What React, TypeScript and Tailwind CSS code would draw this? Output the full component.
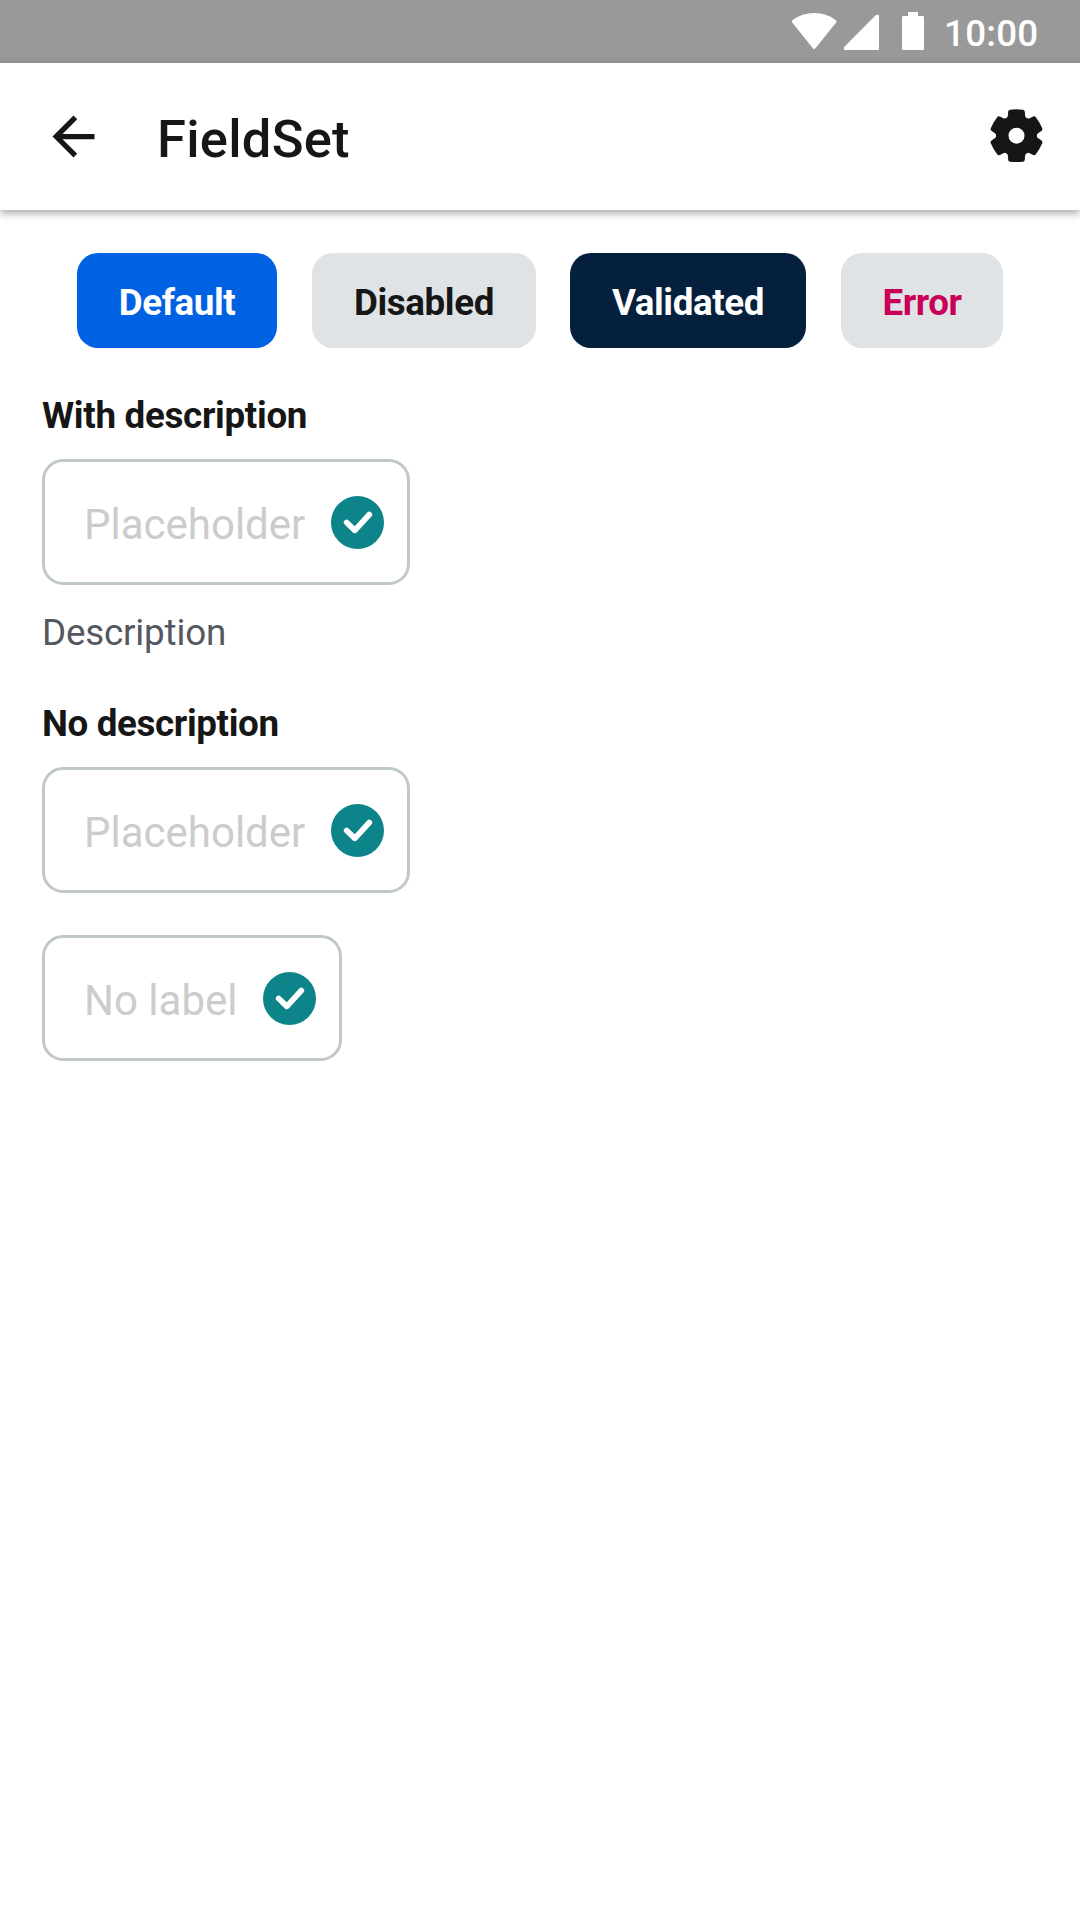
import React from "react";

const TEETH = [0, 60, 120, 180, 240, 300];

function StatusBar() {
  return (
    <div className="flex h-[63px] bg-[#999999] pl-[791px] text-white">
      <svg className="h-[63px] w-[46px] shrink-0" viewBox="33 0 138 189" fill="currentColor">
        <path d="M36 67Q34 63 38 60Q66 39 102.500 39Q139 39 167 60Q171 63 169 67L107 144Q102.500 150 98 144Z" />
      </svg>
      <svg className="ml-[6px] h-[63px] w-[37px] shrink-0" viewBox="189 0 111 189" fill="currentColor">
        <path d="M193 140L287 46Q290 44 293 44Q297 44 297 48V146Q297 150 293 150H195Q192 150 192 146V143Z" />
      </svg>
      <svg className="ml-[21px] h-[63px] w-[24px] shrink-0" viewBox="363 0 72 189" fill="currentColor">
        <path d="M384 36H414V48H428Q432 48 432 52V146Q432 150 428 150H370Q366 150 366 146V52Q366 48 370 48H384Z" />
      </svg>
      <span className="ml-[19px] pt-[2px] text-[36.75px] leading-[63px] font-medium tracking-[0.25px]">10:00</span>
    </div>
  );
}

function Header() {
  return (
    <header className="relative flex h-[147px] items-center bg-white shadow-[0_3px_8px_rgba(0,0,0,0.36)]">
      <svg className="ml-[42px] h-[63px] w-[63px] shrink-0" viewBox="0 0 24 24" fill="currentColor">
        <path d="M20 11H7.830l5.590-5.590L12 4l-8 8 8 8 1.410-1.410L7.830 13H20v-2z" />
      </svg>
      <h1 className="ml-[52px] pt-1 text-[52.5px] leading-[64px] font-medium tracking-[0.25px]">FieldSet</h1>
      <svg className="mr-[36px] ml-auto h-[56px] w-[56px] shrink-0" viewBox="-84 -84 168 168" fill="currentColor">
        <g transform="translate(1.500 -4)">
          <circle r="61" />
          {TEETH.map((a) => (
            <path
              key={a}
              transform={`rotate(${a})`}
              d="M0 0L-30.500 -52.800C-28 -54 -26 -57 -25.600 -62L-25 -72Q-24.600 -77 -20 -78Q0 -80.500 20 -78Q24.600 -77 25 -72L25.600 -62C26 -57 28 -54 30.500 -52.800Z"
            />
          ))}
          <circle r="24" fill="#fff" />
        </g>
      </svg>
    </header>
  );
}

function CheckBadge() {
  return (
    <svg className="mt-[34px] h-[53px] w-[53px] shrink-0 self-start" viewBox="0 0 159 159">
      <circle cx="79.500" cy="79.500" r="79.500" fill="#0c8489" />
      <path d="M47 79.500L71.500 103L115 55.500" fill="none" stroke="#fff" strokeWidth="17" strokeLinecap="round" strokeLinejoin="round" />
    </svg>
  );
}

function Field({ placeholder, width }: { placeholder: string; width: string }) {
  return (
    <div className={`flex h-[126px] items-center justify-between rounded-[21px] border-3 border-[#c1c8cc] pr-[23px] pl-[39px] ${width}`}>
      <span className="pt-[5px] text-[42px] leading-[50px] text-[#cccccc]">{placeholder}</span>
      <CheckBadge />
    </div>
  );
}

const BUTTONS = [
  { label: "Default", style: "w-[200px] bg-[#0062e3] text-white" },
  { label: "Disabled", style: "ml-[35px] w-[224px] bg-[#e0e3e5] text-[#161616]" },
  { label: "Validated", style: "ml-[34px] w-[236px] bg-[#05203c] text-white" },
  { label: "Error", style: "ml-[35px] w-[162px] bg-[#e0e3e5] text-[#c80058]" },
];

export default function App() {
  return (
    <div className="h-[1920px] w-[1080px] overflow-hidden bg-white font-[Roboto,sans-serif] text-[#161616]">
      <StatusBar />
      <Header />
      <div className="mt-[43px] ml-[77px] flex">
        {BUTTONS.map((b) => (
          <button
            key={b.label}
            className={`flex h-[95px] items-center justify-center rounded-[21px] pt-[4px] text-[36.75px] leading-[44px] font-bold tracking-[-0.4px] ${b.style}`}
          >
            {b.label}
          </button>
        ))}
      </div>
      <main className="ml-[42px] flex flex-col items-start pt-[42px]">
        <label className="mb-[18px] text-[36.75px] leading-[51px] font-bold tracking-[-0.3px]">With description</label>
        <Field placeholder="Placeholder" width="w-[368px]" />
        <p className="mt-[22px] text-[36.75px] leading-[51px] tracking-[-0.18px] text-[#545860]">Description</p>
        <label className="mt-[40px] mb-[18px] text-[36.75px] leading-[51px] font-bold tracking-[-0.36px]">No description</label>
        <Field placeholder="Placeholder" width="w-[368px]" />
        <div className="mt-[42px]">
          <Field placeholder="No label" width="w-[300px]" />
        </div>
      </main>
    </div>
  );
}
